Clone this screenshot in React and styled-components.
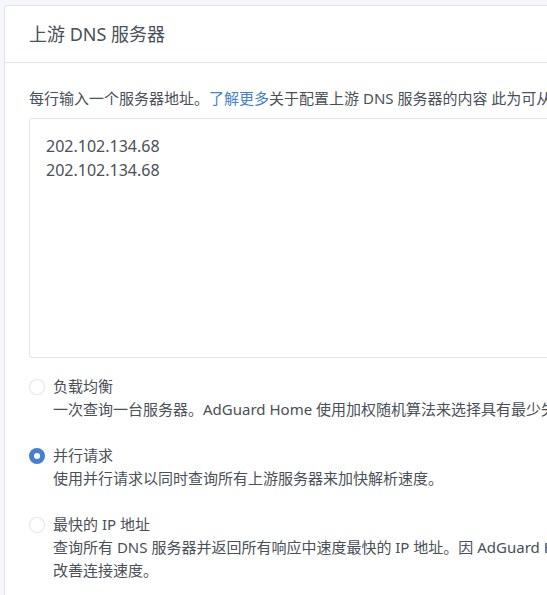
import React from "react";
import styled, { createGlobalStyle } from "styled-components";

const Global = createGlobalStyle`
  html, body { margin: 0; padding: 0; background: #f5f7fb; overflow: hidden; }
  body {
    font-family: "Noto Sans", "Noto Sans CJK SC", sans-serif;
    color: #495057;
    font-size: 15px;
  }
`;

const Page = styled.div`
  width: 547px;
  height: 595px;
  overflow: hidden;
  padding: 5px 0 0 4px;
  box-sizing: border-box;
`;

const Card = styled.section`
  width: 1000px;
  background: #fff;
  border: 1px solid rgba(0, 40, 100, 0.12);
  border-radius: 3px;
  box-sizing: border-box;
`;

const CardHeader = styled.header`
  display: flex;
  align-items: center;
  height: 55px;
  padding: 0 24px 1px;
  border-bottom: 1px solid rgba(0, 40, 100, 0.12);
`;

const Title = styled.h3`
  margin: 0;
  font-size: 18px;
  line-height: 24px;
  font-weight: 400;
  color: #495057;
`;

const CardBody = styled.div`
  padding: 24px;
`;

const Hint = styled.div`
  line-height: 23px;
  white-space: nowrap;
  margin-bottom: 8px;
`;

const Link = styled.a`
  color: #467fcf;
  text-decoration: none;
`;

const TextArea = styled.textarea`
  display: block;
  width: 100%;
  height: 240px;
  box-sizing: border-box;
  padding: 15px 16px;
  border: 1px solid rgba(0, 40, 100, 0.12);
  border-radius: 3px;
  font-family: "Noto Sans", "Noto Sans CJK SC", sans-serif;
  font-size: 16px;
  line-height: 24px;
  color: #495057;
  resize: none;
  outline: none;
`;

const Options = styled.div`
  display: flex;
  flex-direction: column;
  gap: 23px;
  margin-top: 17px;
`;

const Option = styled.label`
  display: grid;
  grid-template-columns: 16px 1fr;
  column-gap: 8px;
  line-height: 23px;
`;

const Radio = styled.span`
  width: 16px;
  height: 16px;
  margin-top: 4px;
  box-sizing: border-box;
  border-radius: 50%;
  border: ${(p) => (p.$checked ? "none" : "1px solid rgba(0, 40, 100, 0.12)")};
  background: ${(p) => (p.$checked ? "#467fcf" : "#fff")};
  display: flex;
  align-items: center;
  justify-content: center;
  &::after {
    content: "";
    display: ${(p) => (p.$checked ? "block" : "none")};
    width: 6px;
    height: 6px;
    border-radius: 50%;
    background: #fff;
  }
`;

const OptionText = styled.div`
  display: flex;
  flex-direction: column;
`;

const OptionTitle = styled.span``;

const OptionDesc = styled.span`
  white-space: nowrap;
`;

const options = [
  {
    title: "负载均衡",
    desc: ["一次查询一台服务器。AdGuard Home 使用加权随机算法来选择具有最少失败请求数量的服务器。"],
  },
  {
    title: "并行请求",
    desc: ["使用并行请求以同时查询所有上游服务器来加快解析速度。"],
    checked: true,
  },
  {
    title: "最快的 IP 地址",
    desc: [
      "查询所有 DNS 服务器并返回所有响应中速度最快的 IP 地址。因 AdGuard Home 必须等待所有 DNS 服务器的响应，这会减慢 DNS 查询速度，但会",
      "改善连接速度。",
    ],
  },
];

export default function App() {
  return (
    <Page>
      <Global />
      <Card>
        <CardHeader>
          <Title>上游 DNS 服务器</Title>
        </CardHeader>
        <CardBody>
          <Hint>
            每行输入一个服务器地址。<Link href="#">了解更多</Link>关于配置上游 DNS 服务器的内容 此为可从 AdGuard Home 使用的服务器列表。
          </Hint>
          <TextArea readOnly value={"202.102.134.68\n202.102.134.68"} />
          <Options>
            {options.map((o) => (
              <Option key={o.title}>
                <Radio $checked={o.checked} />
                <OptionText>
                  <OptionTitle>{o.title}</OptionTitle>
                  {o.desc.map((d) => (
                    <OptionDesc key={d}>{d}</OptionDesc>
                  ))}
                </OptionText>
              </Option>
            ))}
          </Options>
        </CardBody>
      </Card>
    </Page>
  );
}
